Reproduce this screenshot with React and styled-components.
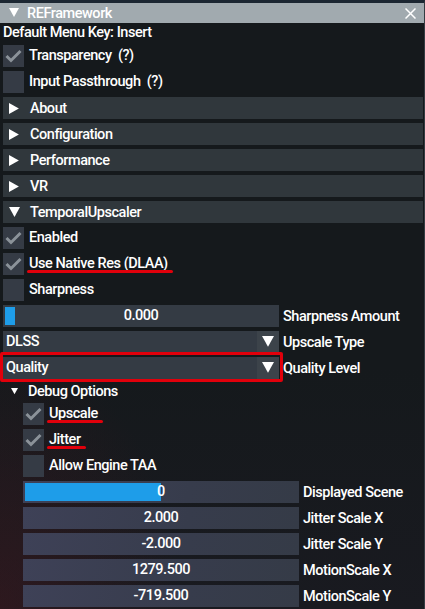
import React from 'react';
import styled, { createGlobalStyle, css } from 'styled-components';

const GlobalStyle = createGlobalStyle`
  html, body {
    margin: 0;
    padding: 0;
    background: #15191c;
  }
  body {
    width: 425px;
    height: 609px;
    overflow: hidden;
    font-family: Roboto, "Noto Sans", sans-serif;
    font-weight: 500;
    font-size: 14.5px;
    letter-spacing: -0.45px;
    color: #fff;
  }
`;

const Window = styled.div`
  box-sizing: border-box;
  width: 425px;
  height: 609px;
  overflow: hidden;
  display: flex;
  flex-direction: column;
  border-top: 3px solid #1c2732;
  border-right: 1px solid #343c42;
  background:
    radial-gradient(ellipse 180px 260px at 0% 100%, rgba(70, 22, 28, 0.45), transparent 100%),
    linear-gradient(to bottom, #15191c 0%, #15191c 60%, #191a20 100%);
`;

const TitleBar = styled.div`
  height: 20px;
  flex-shrink: 0;
  display: flex;
  align-items: center;
  gap: 8px;
  padding: 0 8px 0 9px;
  background: #a1aaaf;
`;

const Close = styled.svg`
  margin-left: auto;
  width: 11px;
  height: 11px;
`;

const Body = styled.div`
  display: flex;
  flex-direction: column;
  gap: 4px;
  padding: 2px 1px 0 3px;
`;

const TextLine = styled.div`
  height: 16px;
  line-height: 16px;
  white-space: nowrap;
`;

const Row = styled.div`
  display: flex;
  align-items: center;
  height: 22px;
  gap: ${p => p.$gap || 5}px;
  white-space: pre;
`;

const Indent = styled.div`
  display: flex;
  flex-direction: column;
  gap: 4px;
  padding-left: 20px;
`;

const Box = styled.div`
  width: 21px;
  height: 22px;
  flex-shrink: 0;
  background: #353b45;
  display: flex;
  align-items: center;
  justify-content: center;
`;

const Label = styled.span`
  position: relative;
  line-height: 16px;
  ${p => p.$marked && css`
    &::after {
      content: '';
      position: absolute;
      left: -2px;
      right: -5px;
      bottom: -1px;
      height: 3px;
      border-radius: 2px;
      background: #e1000b;
    }
  `}
`;

const Header = styled.div`
  display: flex;
  align-items: center;
  gap: 10px;
  height: 22px;
  padding-left: 6px;
  background: #30373c;
`;

const TreeRow = styled.div`
  display: flex;
  align-items: center;
  gap: 10px;
  height: 16px;
  padding-left: 8px;
`;

const Frame = styled.div`
  position: relative;
  box-sizing: border-box;
  width: 276px;
  height: 22px;
  flex-shrink: 0;
  display: flex;
  align-items: center;
  background: ${p => p.$low
    ? 'linear-gradient(100deg, #3e4157 0%, #373c4c 60%, #353b47 100%)'
    : '#343b44'};
`;

const Value = styled.span`
  position: relative;
  flex: 1;
  text-align: center;
  line-height: 16px;
`;

const Grab = styled.div`
  position: absolute;
  left: 2px;
  top: 2px;
  bottom: 2px;
  background: #1e9de9;
`;

const ComboText = styled.span`
  flex: 1;
  padding-left: 3px;
  line-height: 16px;
`;

const ArrowButton = styled.div`
  width: 22px;
  height: 22px;
  display: flex;
  align-items: center;
  justify-content: center;
  background: #3c434a;
`;

const Highlight = styled.div`
  position: relative;
`;

const RedBox = styled.div`
  position: absolute;
  top: -5px;
  bottom: -3px;
  left: -3px;
  right: -4px;
  border: 3px solid #e1000b;
  border-radius: 2px;
  pointer-events: none;
`;

const Tri = ({ dir = 'right', size = 10 }) => {
  const pts = dir === 'down' ? '0,0 10,0 5,9' : '0,0 9,5 0,10';
  return (
    <svg width={size} height={size} viewBox="0 0 10 10" style={{ flexShrink: 0 }}>
      <polygon points={pts} fill="#fff" />
    </svg>
  );
};

const Check = () => (
  <svg width="17" height="14" viewBox="0 0 17 14">
    <polyline points="1.5,7 6,11.5 15.5,2" fill="none" stroke="#8b9299" strokeWidth="3" />
  </svg>
);

const CheckRow = ({ checked, label, marked }) => (
  <Row>
    <Box>{checked && <Check />}</Box>
    <Label $marked={marked}>{label}</Label>
  </Row>
);

const SliderRow = ({ value, label, low, grab }) => (
  <Row $gap={4}>
    <Frame $low={low}>
      {grab && <Grab style={{ width: grab }} />}
      <Value>{value}</Value>
    </Frame>
    <span>{label}</span>
  </Row>
);

const Combo = ({ value }) => (
  <Frame>
    <ComboText>{value}</ComboText>
    <ArrowButton><Tri dir="down" size={12} /></ArrowButton>
  </Frame>
);

const headers = ['About', 'Configuration', 'Performance', 'VR'];

const lowSliders = [
  ['2.000', 'Jitter Scale X'],
  ['-2.000', 'Jitter Scale Y'],
  ['1279.500', 'MotionScale X'],
  ['-719.500', 'MotionScale Y'],
];

export default function App() {
  return (
    <Window>
      <GlobalStyle />
      <TitleBar>
        <Tri dir="down" size={10} />
        <span>REFramework</span>
        <Close viewBox="0 0 11 11">
          <path d="M0.5 0.5 L10.5 10.5 M10.5 0.5 L0.5 10.5" stroke="#fff" strokeWidth="1.5" />
        </Close>
      </TitleBar>
      <Body>
        <TextLine>Default Menu Key: Insert</TextLine>
        <CheckRow checked label="Transparency  (?)" />
        <CheckRow label="Input Passthrough  (?)" />
        {headers.map(h => (
          <Header key={h}>
            <Tri size={11} />
            <span>{h}</span>
          </Header>
        ))}
        <Header>
          <Tri dir="down" size={11} />
          <span>TemporalUpscaler</span>
        </Header>
        <CheckRow checked label="Enabled" />
        <CheckRow checked marked label="Use Native Res (DLAA)" />
        <CheckRow label="Sharpness" />
        <SliderRow value="0.000" label="Sharpness Amount" grab={10} />
        <Row $gap={4}>
          <Combo value="DLSS" />
          <span>Upscale Type</span>
        </Row>
        <Row $gap={4}>
          <Highlight>
            <Combo value="Quality" />
            <RedBox />
          </Highlight>
          <span>Quality Level</span>
        </Row>
        <TreeRow>
          <Tri dir="down" size={7} />
          <span>Debug Options</span>
        </TreeRow>
        <Indent>
          <CheckRow checked marked label="Upscale" />
          <CheckRow checked marked label="Jitter" />
          <CheckRow label="Allow Engine TAA" />
          <SliderRow low value="0" label="Displayed Scene" grab={136} />
          {lowSliders.map(([v, l]) => (
            <SliderRow key={l} low value={v} label={l} />
          ))}
        </Indent>
      </Body>
    </Window>
  );
}
